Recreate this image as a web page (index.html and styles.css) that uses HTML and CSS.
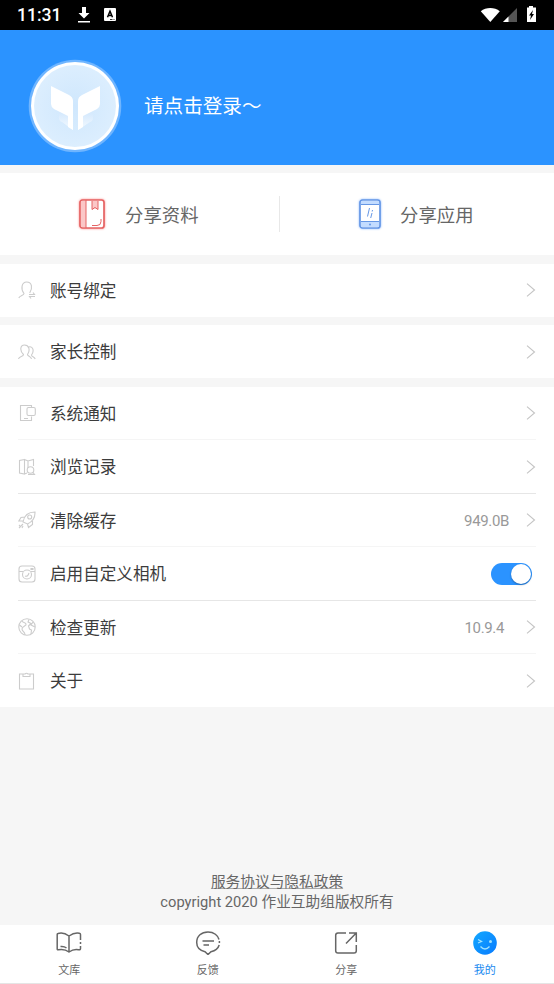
FILE: index.html
```html
<!DOCTYPE html>
<html lang="zh-CN">
<head>
<meta charset="utf-8">
<title>我的</title>
<link rel="stylesheet" href="styles.css">
</head>
<body>
<div class="app">
  <div class="status">
    <span class="clock">11:31</span>
    <svg class="download" width="14" height="18" viewBox="0 0 14 18"><path fill="#fff" d="M5 1h4v6h3.500L7 12.500 1.500 7H5zM1 15h12v1.600H1z"/></svg>
    <span class="abox"><svg width="12" height="13" viewBox="0 0 12 13"><rect width="12" height="13" rx="1" fill="#fff"/><path d="M3.500 9.300 6 3.200l2.500 6.100M4.500 7.400h3" fill="none" stroke="#000" stroke-width="1.500"/><path d="M6 11.500h2.500m1 0h1" stroke="#000" stroke-width=".8"/></svg></span>
    <svg class="signals" width="60" height="20" viewBox="0 0 60 20"><path fill="#fff" d="M.8 6.200C6 1.800 14.500 1.800 19.800 6.200L10.300 17z"/><path fill="#555" d="M37 3v14H23z"/><path fill="#fff" d="M28.500 11.500V17H23z"/><path fill="#fff" d="M49 2.500V1h4v1.500h3V17h-9V2.500z"/><path fill="#000" d="m53 5-4 5.500h2L50 15l4-6h-2z"/></svg>
  </div>
  <header class="profile">
    <svg class="avatar" width="94" height="94" viewBox="0 0 94 94">
      <defs>
        <radialGradient id="disc"><stop offset="0" stop-color="#cfe7fd"/><stop offset="1" stop-color="#dceefe"/></radialGradient>
        <linearGradient id="fold" x1="0" y1="0" x2="0" y2="1"><stop offset="0" stop-color="#d5e9fd"/><stop offset="1" stop-color="#f4faff"/></linearGradient>
      </defs>
      <circle cx="47" cy="47" r="46.300" fill="#6fb5ff"/><circle cx="47" cy="47" r="44" fill="#fff"/><circle cx="47" cy="47" r="41" fill="url(#disc)"/>
      <path fill="url(#fold)" d="M31 54v5q0 3 3 4l11 8V56zM65 54v5q0 3-3 4L50 71V56z"/>
      <path fill="#fff" d="M23 27 41 36q4 2 4 6v29l-5-3V57L26 50q-3-2-3-5zM72 27 54 36q-4 2-4 6v29l5-3V57l14-7q3-2 3-5z"/>
    </svg>
    <span class="login">请点击登录～</span>
  </header>
  <section class="share">
    <div class="share-item">
      <svg class="glow-red" width="26" height="30" viewBox="0 0 26 30"><rect x="1" y="1" width="24" height="28" rx="2.500" fill="#fff" stroke="#e56464" stroke-width="1.700"/><path fill="#fbc7c7" d="M2 2h5v26H2zM13 2h6v9l-3-2-3 2z"/><path fill="none" stroke="#e56464" d="M7 1v28M13 2v8.500l3-2 3 2V2M13 26.500h5q4 0 4-4V20"/></svg>
      <span>分享资料</span>
    </div>
    <i class="divider"></i>
    <div class="share-item second">
      <svg class="glow-blue" width="22" height="30" viewBox="0 0 22 30"><rect x="1" y="1" width="20" height="28" rx="2.500" fill="#fff" stroke="#6697e5" stroke-width="1.700"/><path fill="#c3dcff" d="M2 2h18v3H2zM2 23h18v5H2z"/><path fill="none" stroke="#6697e5" d="M2 5.500h18M2 22.500h18M10.500 9l-2 8.500M13.500 11l-.3 1.500m-.2 1.500-1.300 5"/><circle cx="11" cy="25.500" r="1" fill="#6697e5"/></svg>
      <span>分享应用</span>
    </div>
  </section>
  <section class="group">
    <div class="row"><svg class="ico" viewBox="0 0 18 18"><path d="M.8 17c.7-2.700 5.200-2.500 5.200-4.500C2.500 8 3.500 1 8.700 1s6.300 6 3 11M11 13.500h5.500l-1.500-2M17 15.500h-5.500l1.500 2"/></svg><span class="label">账号绑定</span><svg class="arrow" viewBox="0 0 10 14"><path d="m1 .7 7.500 6.300L1 13.300"/></svg></div>
  </section>
  <section class="group">
    <div class="row"><svg class="ico" viewBox="0 0 18 18"><path d="M.5 16c.5-3 5-2 5-4.500C1.500 8 2 2 6.500 2s6 5 3 9.500c0 2 3.500 1.500 4 4.500M10.500 4c4.500-1.500 6 4 3 8 0 2 3 1.500 3.700 4"/></svg><span class="label">家长控制</span><svg class="arrow" viewBox="0 0 10 14"><path d="m1 .7 7.500 6.300L1 13.300"/></svg></div>
  </section>
  <section class="group">
    <div class="row faint"><svg class="ico" viewBox="0 0 18 18"><path d="M13.500 3.500v-2h-11v15h11v-4M6 14.500h4"/><rect x="9" y="3.500" width="8.300" height="8" rx="1.500"/></svg><span class="label">系统通知</span><svg class="arrow" viewBox="0 0 10 14"><path d="m1 .7 7.500 6.300L1 13.300"/></svg></div>
    <div class="row"><svg class="ico" viewBox="0 0 18 18"><path d="m6.500 1.500-5 1V15l5 1zm0 0L10 3l5.500-1.500V8M6.500 16 9 15M10 3v7"/><circle cx="12.500" cy="12" r="3.300"/><path d="m15 14.500 1.500 2H10"/></svg><span class="label">浏览记录</span><svg class="arrow" viewBox="0 0 10 14"><path d="m1 .7 7.500 6.300L1 13.300"/></svg></div>
    <div class="row faint"><svg class="ico" viewBox="0 0 18 18"><path d="M5 11C6 5 10 1 17 1c.3 6-3 10-7.500 12zM7 6 3 6.500.8 10H5M9.500 13l1 3.500 4-3V10M1 17l4-4M2 14l-1 1m4 0-1 2"/><circle cx="11.700" cy="6" r="2"/></svg><span class="label">清除缓存</span><span class="value cache">949.0B</span><svg class="arrow" viewBox="0 0 10 14"><path d="m1 .7 7.500 6.300L1 13.300"/></svg></div>
    <div class="row"><svg class="ico" viewBox="0 0 18 18"><rect x="1" y="1" width="16" height="16" rx="3"/><path d="M1 6.500h4m8 0h4M13 3.500h2v1h-2z"/><circle cx="9" cy="9.500" r="4.500"/><path d="M7 11q3 1 4-3"/></svg><span class="label">启用自定义相机</span><span class="toggle"></span></div>
    <div class="row faint"><svg class="ico" viewBox="0 0 18 18"><circle cx="9" cy="9" r="8.200"/><path d="M4 3c1 2 3 1 4 3S4 8 4 11s3 2 3 6M1.500 7 4 9M11 1.500 10 4l3 1.500L10.500 8l1 3 2 1-.5 4M15 4l-2 3 4 2"/></svg><span class="label">检查更新</span><span class="value version">10.9.4</span><svg class="arrow" viewBox="0 0 10 14"><path d="m1 .7 7.500 6.300L1 13.300"/></svg></div>
    <div class="row"><svg class="ico" viewBox="0 0 18 18"><path d="M5 2H1.500v15h14V2H12M5 2v2.500h7V2h-2Q8.500.500 7 2z"/></svg><span class="label">关于</span><svg class="arrow" viewBox="0 0 10 14"><path d="m1 .7 7.500 6.300L1 13.300"/></svg></div>
  </section>
  <footer class="legal">
    <div><a class="policy">服务协议与隐私政策</a></div>
    <div>copyright 2020 作业互助组版权所有</div>
  </footer>
  <nav class="tabs">
    <div class="tab"><svg width="26" height="24" viewBox="0 0 26 24"><path d="M13 5C9 2 5.500 1.500 2 2.500q-.8.200-.8 1V18q0 1 1 .8c4-.8 7.500-.3 10.800 2.200 3.500-2.500 6-3 9.500-2.300 1.500.3 2-.2 2-1.200V15m0-2v-2m0-2V3.500q0-1-1-1.200C20 1.500 16.500 2.500 13 5v16M4.500 15.500q3.500-.5 6 1.500"/></svg><span>文库</span></div>
    <div class="tab"><svg width="26" height="24" viewBox="0 0 26 24"><path d="M24.200 14C23 18 19 20 16 20.700L13 23.500 10 20.700C5 19.500 1.700 16 1.700 11.500 1.700 5 6.500 1 13 1c6 0 10 3.500 11 7.500m.4 1.500v2M7.500 10H19M8.500 14h5.500"/></svg><span>反馈</span></div>
    <div class="tab"><svg width="26" height="24" viewBox="0 0 26 24"><path d="M13 2H5Q2.700 2 2.700 4.300v15.400Q2.700 22 5 22h16q2.300 0 2.300-2.300V14M16 2h7.300v9M23 2.300 13 12.500"/></svg><span>分享</span></div>
    <div class="tab active"><svg width="26" height="24" viewBox="0 0 26 24"><defs><linearGradient id="face" x1="0" y1="0" x2="1" y2="1"><stop offset="0" stop-color="#13a8ff"/><stop offset="1" stop-color="#087bff"/></linearGradient></defs><circle cx="13" cy="12" r="11.800" fill="url(#face)" stroke="none"/><path class="wink" d="m6 8.500 3.500 2-3.500 1.500M8.500 15.500q4.500 5 9 0"/><circle class="eye" cx="18.500" cy="10.500" r="1.500"/></svg><span>我的</span></div>
  </nav>
</div>
</body>
</html>
```
FILE: styles.css
```css
* { box-sizing: border-box; }
body { margin: 0; font-family: Roboto, "Noto Sans CJK SC", sans-serif; background: #f6f6f6; }
svg { display: block; flex: none; }
.app { height: 984px; width: 554px; display: flex; flex-direction: column; overflow: hidden; }
.status { height: 29.5px; flex: none; background: #000; display: flex; align-items: center; padding: 0 17px; color: #fff; }
.clock { font-size: 17.5px; font-weight: 500; line-height: 20px; width: 60px; padding-top: 1px; }
.download { margin-top: 1px; }
.abox { margin-left: 13px; }
.signals { width: 60px; margin-left: auto; margin-right: -3px; margin-top: 1px; }
.profile { height: 135.5px; flex: none; background: #2b93ff; display: flex; align-items: center; padding: 17px 0 0 28px; }
.login { margin-left: 22px; padding-top: 2px; font-size: 19.6px; line-height: 30px; color: #fff; font-weight: 400; }
.share { height: 82px; flex: none; margin-top: 8px; background: #fff; display: flex; align-items: center; font-size: 18.4px; color: #666; }
.share-item { width: 279px; display: flex; align-items: center; padding-left: 79px; gap: 20px; }
.share-item.second { width: 274px; gap: 19px; }
.divider { width: 1px; height: 36px; background: #e8e8e8; }
.glow-red { filter: drop-shadow(0 0 1px #ff8a8a); }
.glow-blue { filter: drop-shadow(0 0 1px #8ab8ff); }
.group { background: #fff; margin-top: 8.5px; flex: none; padding-left: 18px; padding-right: 18px; }
.row { height: 53.5px; display: flex; align-items: center; padding-top: 1px; border-bottom: 1px solid #e6e6e6; }
.row.faint { border-bottom-color: #f5f5f5; }
.row:last-child { border-bottom-color: transparent; height: 53px; }
.ico { width: 18px; height: 18px; margin-right: 14px; fill: none; stroke: #ccc; stroke-width: 1.1; }
.label { font-size: 16.6px; line-height: 24px; color: #3c3c3c; flex: 1; padding-top: 3px; }
.arrow { width: 10px; height: 14px; fill: none; stroke: #c4c4c4; stroke-width: 1.1; }
.value { font-size: 15px; letter-spacing: -.35px; color: #999; padding-top: 2px; }
.cache { margin-right: 17px; }
.version { margin-right: 22px; }
.toggle { width: 41px; height: 22px; border-radius: 11px; background: #2b93ff; margin-right: 4px; display: flex; justify-content: flex-end; padding: 1px; }
.toggle::after { content: ""; width: 20px; height: 20px; border-radius: 50%; background: #fff; box-shadow: 0 1px 2px rgba(0, 0, 0, .3); }
.legal { margin-top: auto; padding-bottom: 12px; text-align: center; font-size: 14.7px; line-height: 20.5px; color: #666; }
.policy { text-decoration: underline; text-decoration-thickness: 1px; text-underline-offset: 1px; text-decoration-color: #aaa; }
.tabs { height: 59.5px; flex: none; display: flex; background: #fff; border-bottom: 1px solid #e5e5e5; }
.tab { flex: 1; display: flex; flex-direction: column; align-items: center; padding-top: 6px; font-size: 11px; line-height: 16px; color: #666; gap: 8px; }
.tab svg { fill: none; stroke: #666; stroke-width: 1.5; }
.active { color: #1989f0; }
.tab .wink { stroke: #9fe2ff; stroke-width: 1.3; }
.tab .eye { fill: #9fe2ff; stroke: none; }
```
